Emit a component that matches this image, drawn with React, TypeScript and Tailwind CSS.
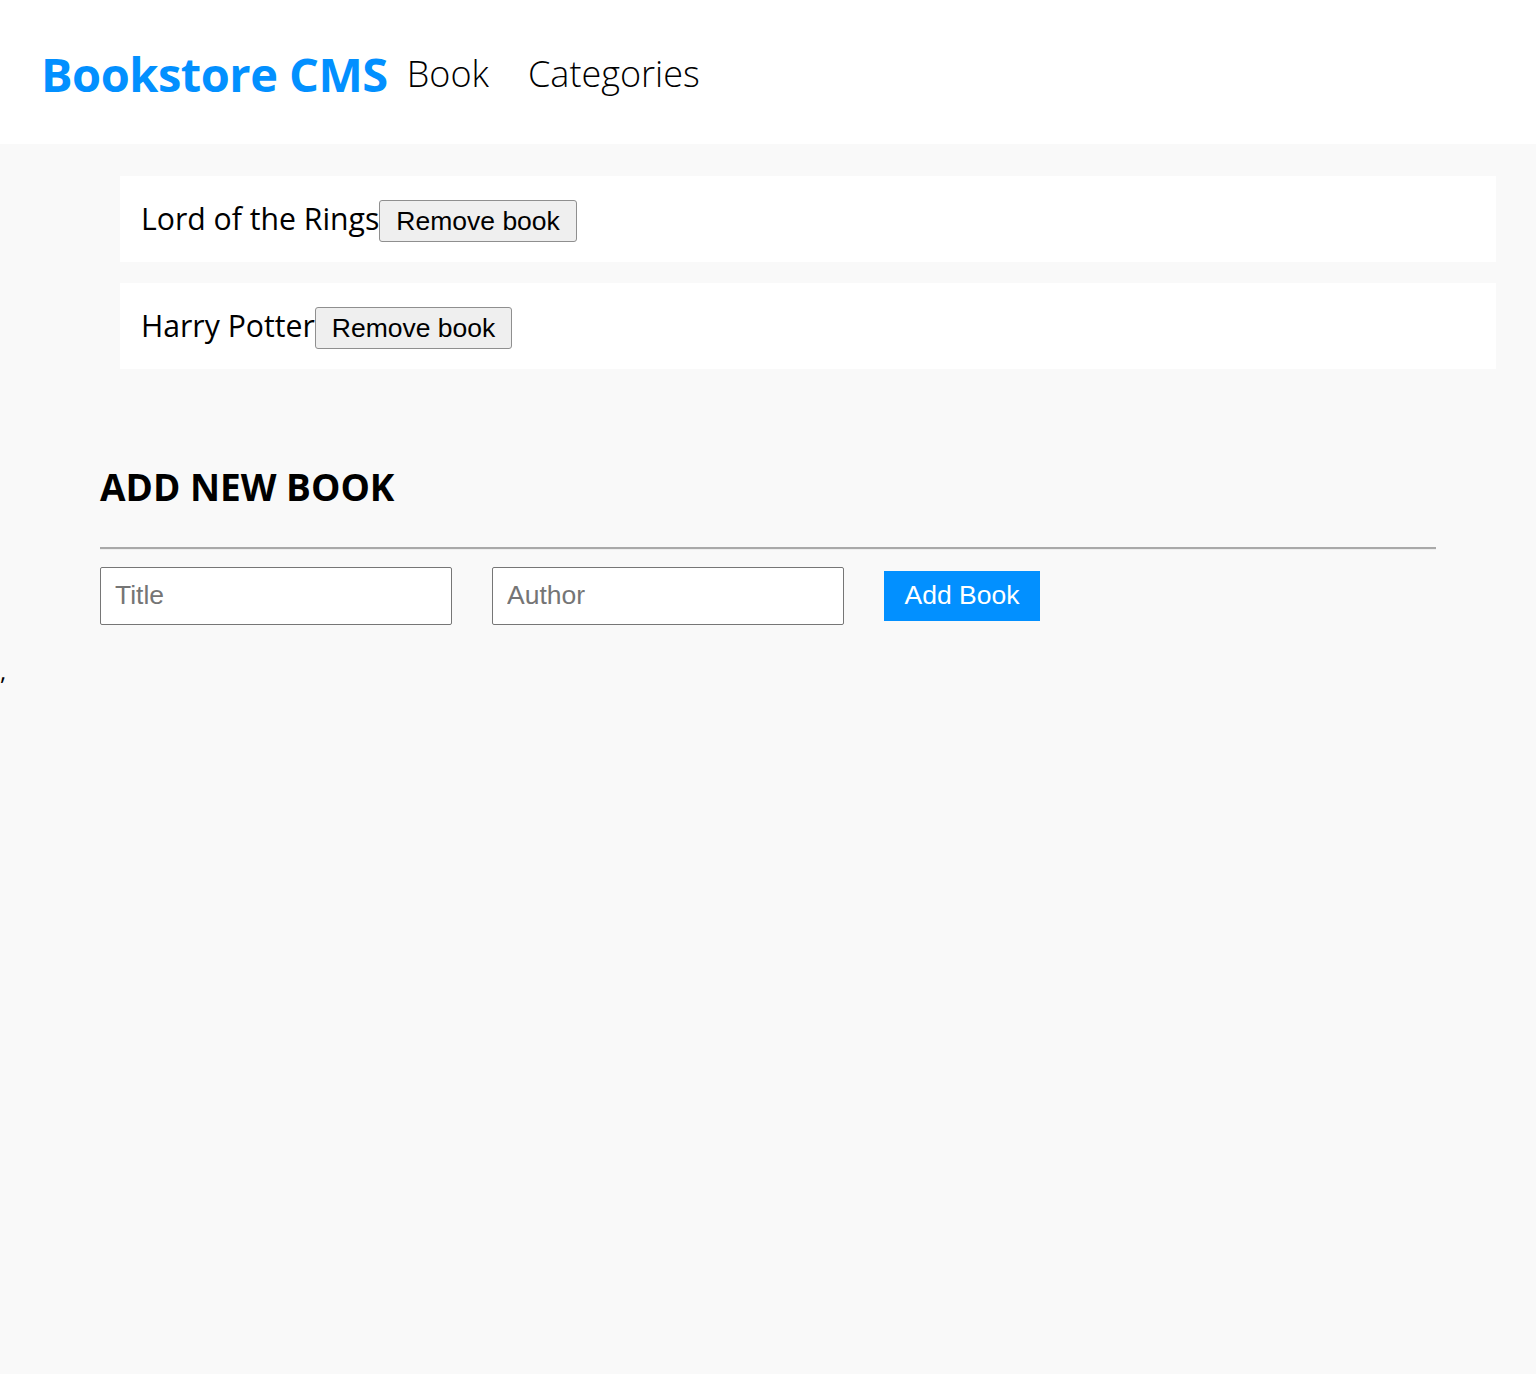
import { useState } from "react";

const ui = "font-['Open_Sans',sans-serif]";
const native = "font-['Liberation_Sans',Arial,sans-serif]";

export default function App() {
  const [books, setBooks] = useState([
    { id: 1, title: "Lord of the Rings" },
    { id: 2, title: "Harry Potter" },
  ]);

  return (
    <div className={`min-h-[1374px] bg-[#f9f9f9] ${ui}`}>
      <header className="flex h-[144px] items-center bg-white pl-[41px] pt-[4px]">
        <h1 className="text-[47px] font-bold tracking-[-0.5px] text-[#0290ff]">Bookstore CMS</h1>
        <nav className="ml-[19px] flex gap-[39px] text-[36px] font-light text-black">
          <a>Book</a>
          <a>Categories</a>
        </nav>
      </header>

      <ul className="ml-[120px] mr-[40px] flex flex-col gap-[21px] pt-[32px]">
        {books.map((b) => (
          <li key={b.id} className="flex h-[86px] items-center bg-white pl-[21px]">
            <span className="text-[30.2px] text-black">{b.title}</span>
            <button
              onClick={() => setBooks(books.filter((x) => x.id !== b.id))}
              className={`mt-[4px] h-[42px] rounded-[3px] border border-[#8f8f8f] bg-[#efefef] px-[16px] text-[26.5px] leading-none text-black ${native}`}
            >
              Remove book
            </button>
          </li>
        ))}
      </ul>

      <section className="mx-[100px] mt-[90px]">
        <h2 className="text-[37px] font-bold text-black">ADD NEW BOOK</h2>
        <div className="mt-[32px] border-t-2 border-t-[#a9a9a9] border-b border-b-[#eeeeee]" />
        <form className={`mt-[17px] flex items-center gap-[40px] ${native}`}>
          <input
            placeholder="Title"
            className="h-[58px] w-[352px] rounded-[2px] border border-[#767676] bg-white px-[14px] text-[26.5px] placeholder:text-[#757575]"
          />
          <input
            placeholder="Author"
            className="h-[58px] w-[352px] rounded-[2px] border border-[#767676] bg-white px-[14px] text-[26.5px] placeholder:text-[#757575]"
          />
          <button type="button" className="h-[50px] w-[156px] bg-[#0290ff] text-[26.5px] text-white">
            Add Book
          </button>
        </form>
      </section>

      <p className="mt-[34px] text-[24px] leading-none text-black">,</p>
    </div>
  );
}
